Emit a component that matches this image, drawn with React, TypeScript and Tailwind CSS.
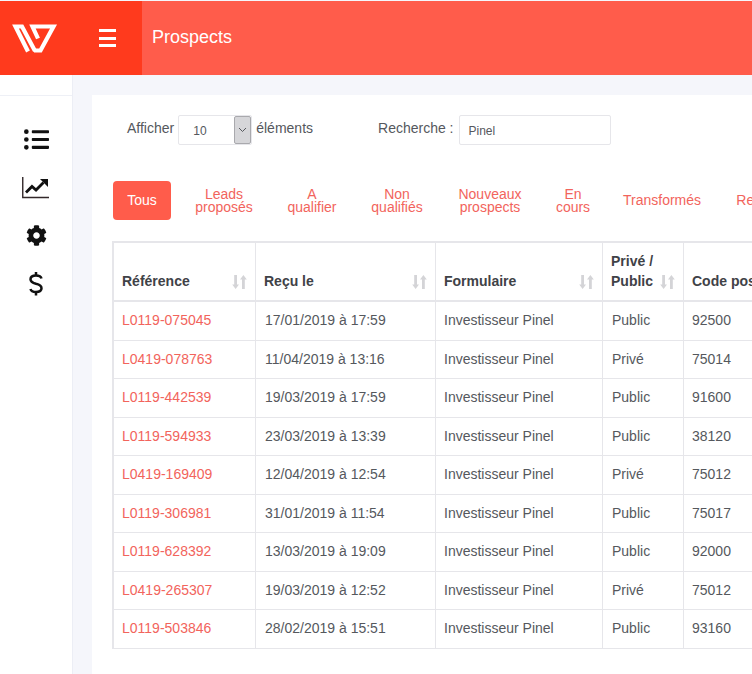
import React from 'react';
import { FaListUl, FaCog } from 'react-icons/fa';

const rows = [
    ['L0119-075045', '17/01/2019 à 17:59', 'Public', '92500'],
    ['L0419-078763', '11/04/2019 à 13:16', 'Privé', '75014'],
    ['L0119-442539', '19/03/2019 à 17:59', 'Public', '91600'],
    ['L0119-594933', '23/03/2019 à 13:39', 'Public', '38120'],
    ['L0419-169409', '12/04/2019 à 12:54', 'Privé', '75012'],
    ['L0119-306981', '31/01/2019 à 11:54', 'Public', '75017'],
    ['L0119-628392', '13/03/2019 à 19:09', 'Public', '92000'],
    ['L0419-265307', '19/03/2019 à 12:52', 'Privé', '75012'],
    ['L0119-503846', '28/02/2019 à 15:51', 'Public', '93160'],
];

const tabs = [
    { label: ['Leads', 'proposés'], className: 'w-[104px] pt-[1px]' },
    { label: ['A', 'qualifier'], className: 'w-[72px] pt-[1px]' },
    { label: ['Non', 'qualifiés'], className: 'w-[98px] pt-[1px]' },
    { label: ['Nouveaux', 'prospects'], className: 'w-[88px] pt-[1px]' },
    { label: ['En', 'cours'], className: 'w-[78px] pt-[1px]' },
    { label: ['Transformés'], className: 'w-[100px]' },
    { label: ['Refusés'], className: 'ml-[10px] w-[80px]' },
];

const Logo = () => (
    <svg width="46" height="31" viewBox="0 0 46 31" fill="none" stroke="#fff" strokeWidth="4.200" className="ml-[12px] shrink-0">
        <path d="M16 28.500 L3.500 3.500 H10 L23 28" />
        <path d="M26 15.500 L20.500 3.500 H41.500 L28.500 27.500 H22" />
    </svg>
);

const ChartIcon = () => (
    <svg width="28" height="22" viewBox="0 0 28 22" fill="none" className="mt-[25px]">
        <path d="M.75 0V20.500H27" stroke="#33282a" strokeWidth="1.400" />
        <path d="M4 15.500 10 9.500 14 13 21.500 5.500" stroke="#111" strokeWidth="2.800" />
        <path d="M18 2H26V10z" fill="#111" />
    </svg>
);

const DollarIcon = () => (
    <svg width="14" height="24" viewBox="0 0 14 24" fill="none" stroke="#111" strokeWidth="2.500" className="mt-[26px]">
        <path d="M7 0V3.500M7 20V23.500" />
        <path d="M12.500 6.500C12 4.500 10 3.500 7 3.500 3.500 3.500 1.500 5 1.500 7.300 1.500 10 4 11 7 11.800 10 12.500 12.500 13.500 12.500 16.300 12.500 18.500 10.500 20 7 20 4 20 2 19 1.500 17" />
    </svg>
);

const SortIcon = () => (
    <svg width="15" height="16" viewBox="0 0 15 16" fill="#d4d4d7" className="mb-[1px] shrink-0">
        <path d="M2.200 1h2.800v9.500h2L3.600 15 .2 10.500h2z" />
        <path d="M10 15h2.800V5.500h2L11.400 1 8 5.500h2z" />
    </svg>
);

const HeaderCell = ({ className, children }: { className: string; children: React.ReactNode }) => (
    <th className={`${className} border-r border-b-2 border-[#e6e6ea] px-2 pb-[9px] align-bottom text-left text-[14px] leading-[20px] font-bold text-[#3f4247]`}>
        <div className="flex items-end justify-between">{children}</div>
    </th>
);

const App: React.FC = () => {
    return (
        <div className="h-[674px] w-[752px] overflow-hidden bg-[#f5f6fb] font-['Liberation_Sans',Arial,sans-serif]">
            <header className="mt-px flex h-[74px] bg-[#ff5c4b]">
                <div className="flex h-full w-[142px] items-center bg-[#ff3a1d]">
                    <Logo />
                    <div className="ml-[41px] flex h-[18px] w-[17px] flex-col justify-between">
                        <span className="h-[3px] bg-white" />
                        <span className="h-[3px] bg-white" />
                        <span className="h-[3px] bg-white" />
                    </div>
                </div>
                <div className="flex items-center pb-[1px] pl-[10px] text-[18px] text-white">Prospects</div>
            </header>

            <div className="flex h-[599px]">
                <aside className="w-[73px] shrink-0 border-r border-[#eceef5] bg-white">
                    <div className="h-[21px] border-b border-[#eef0f6]" />
                    <nav className="flex flex-col items-center pt-[31px] text-[#111]">
                        <FaListUl size={25} />
                        <ChartIcon />
                        <FaCog size={21} className="mt-[26px]" />
                        <DollarIcon />
                    </nav>
                </aside>

                <main className="mt-[20px] ml-[19px] flex-1 overflow-hidden bg-white pl-[20px]">
                    <div className="box-content flex h-[30px] items-center pt-[20px] text-[14px] text-[#55585d]">
                        <span className="mb-[4px] ml-[15px]">Afficher</span>
                        <div className="ml-[4px] flex h-[30px] w-[74px] rounded-[2px] border border-[#e6e6ea] bg-white">
                            <span className="flex-1 pt-[7px] pl-[14px] text-[12px] leading-[16px]">10</span>
                            <span className="flex w-[17px] items-center justify-center rounded-[2px] border border-[#a9a9ad] bg-[#d6d6d9]">
                                <svg width="9" height="6" viewBox="0 0 9 6" fill="none" stroke="#55585d" strokeWidth="1">
                                    <path d="M1 1l3.500 3.500L8 1" />
                                </svg>
                            </span>
                        </div>
                        <span className="mb-[4px] ml-[4px]">éléments</span>
                        <span className="mb-[4px] ml-[65px]">Recherche :</span>
                        <div className="ml-[5px] h-[30px] w-[152px] rounded-[2px] border border-[#e6e6ea] pt-[7px] pl-[9px] text-[12px] leading-[16px]">Pinel</div>
                    </div>

                    <div className="mt-[36px] ml-[1px] flex h-[39px] w-[680px] items-center text-[14px] leading-[13px] text-[#f2645c]">
                        <div className="flex h-[39px] w-[58px] shrink-0 items-center justify-center rounded-[4px] bg-[#ff5c4b] text-white">Tous</div>
                        <div className="ml-[1px] flex items-center">
                            {tabs.map(tab => (
                                <div key={tab.label[0]} className={`${tab.className} shrink-0 text-center`}>
                                    {tab.label.map(line => (
                                        <div key={line}>{line}</div>
                                    ))}
                                </div>
                            ))}
                        </div>
                    </div>

                    <table className="mt-[21px] w-[680px] table-fixed border-separate border-spacing-0 border-t-2 border-l-2 border-[#e6e6ea] text-[14px] text-[#55585d]">
                        <thead>
                            <tr className="h-[59px]">
                                <HeaderCell className="w-[142px]">Référence<SortIcon /></HeaderCell>
                                <HeaderCell className="w-[180px]">Reçu le<SortIcon /></HeaderCell>
                                <HeaderCell className="w-[167px]">Formulaire<SortIcon /></HeaderCell>
                                <HeaderCell className="w-[81px]">
                                    <span>Privé /<br />Public</span><SortIcon />
                                </HeaderCell>
                                <HeaderCell className="w-[110px] border-r-0"><span className="whitespace-nowrap">Code postal</span></HeaderCell>
                            </tr>
                        </thead>
                        <tbody>
                            {rows.map(row => (
                                <tr key={row[0]} className="h-[38.5px]">
                                    <td className="border-r border-b border-[#e6e6ea] pl-[8px] text-[#f2645c]">{row[0]}</td>
                                    <td className="border-r border-b border-[#e6e6ea] pl-[9px]">{row[1]}</td>
                                    <td className="border-r border-b border-[#e6e6ea] pl-[8px]">Investisseur Pinel</td>
                                    <td className="border-r border-b border-[#e6e6ea] pl-[9px]">{row[2]}</td>
                                    <td className="border-b border-[#e6e6ea] pl-[8px]">{row[3]}</td>
                                </tr>
                            ))}
                        </tbody>
                    </table>
                </main>
            </div>
        </div>
    );
};

export default App;
